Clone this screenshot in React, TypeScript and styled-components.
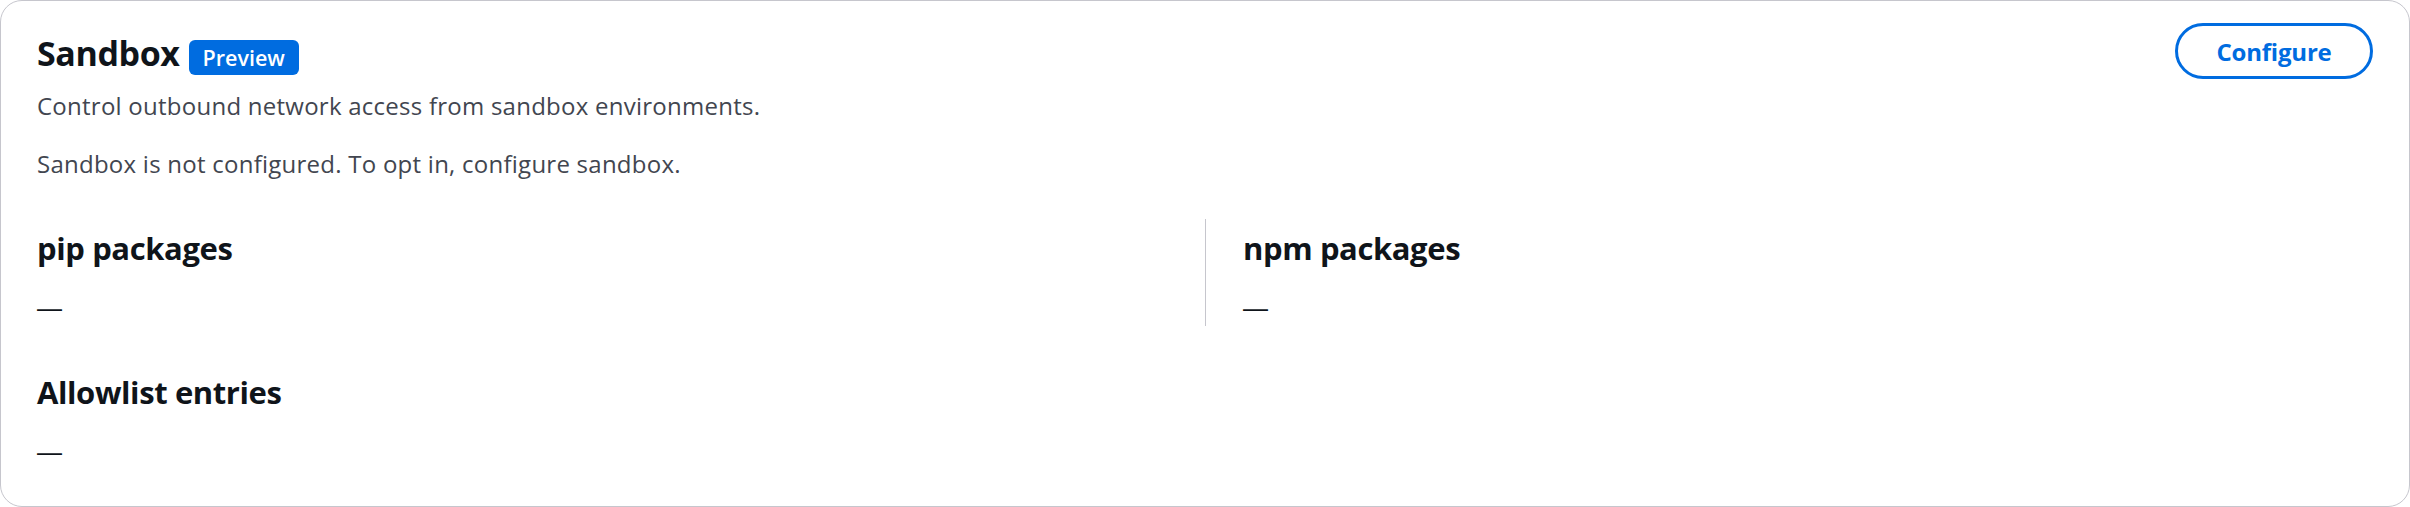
import React from 'react'
import styled, { createGlobalStyle } from 'styled-components'

const GlobalStyle = createGlobalStyle`
    html, body {
        margin: 0;
        padding: 0;
        background: #ffffff;
    }
    body {
        font-family: "Open Sans", "Noto Sans", sans-serif;
        color: #0f141a;
        -webkit-font-smoothing: antialiased;
    }
`;

interface Field {
    label: string
    value?: string
}

const packageFields: Field[] = [
    { label: 'pip packages' },
    { label: 'npm packages' },
];

export default function App() {
    return (
        <>
            <GlobalStyle />
            <Card>
                <Header>
                    <HeaderText>
                        <TitleRow>
                            <Title>Sandbox</Title>
                            <Badge>Preview</Badge>
                        </TitleRow>
                        <Description>Control outbound network access from sandbox environments.</Description>
                        <Status>Sandbox is not configured. To opt in, configure sandbox.</Status>
                    </HeaderText>
                    <ConfigureButton type="button">Configure</ConfigureButton>
                </Header>

                <Columns>
                    {packageFields.map((field, i) => (
                        <Column key={field.label} $divided={i > 0}>
                            <FieldLabel>{field.label}</FieldLabel>
                            <FieldValue>{field.value ?? '—'}</FieldValue>
                        </Column>
                    ))}
                </Columns>

                <Section>
                    <FieldLabel>Allowlist entries</FieldLabel>
                    <FieldValue>—</FieldValue>
                </Section>
            </Card>
        </>
    )
}


const Card = styled.div`
    box-sizing: border-box;
    width: 2410px;
    height: 507px;
    border: 1px solid #c6c6cd;
    border-radius: 22px;
    padding: 22px 36px 0 36px;
    background: #ffffff;
`;

const Header = styled.div`
    display: flex;
    justify-content: space-between;
    align-items: flex-start;
`;

const HeaderText = styled.div`
    padding-top: 7px;
`;

const TitleRow = styled.div`
    display: flex;
    align-items: baseline;
    gap: 9px;
`;

const Title = styled.h2`
    margin: 0;
    font-size: 34px;
    line-height: 46px;
    font-weight: 700;
    letter-spacing: -0.4px;
    color: #0f141a;
`;

const Badge = styled.span`
    display: inline-block;
    background: #006ce0;
    color: #ffffff;
    font-size: 21.5px;
    font-weight: 600;
    line-height: 35px;
    padding: 0 14px;
    border-radius: 6px;
`;

const Description = styled.p`
    margin: 14px 0 0 0;
    font-size: 24px;
    line-height: 32px;
    letter-spacing: 0.25px;
    color: #424650;
`;

const Status = styled(Description)`
    margin-top: 26px;
`;

const ConfigureButton = styled.button`
    box-sizing: border-box;
    width: 198px;
    height: 56px;
    border: 3px solid #006ce0;
    border-radius: 28px;
    background: #ffffff;
    color: #006ce0;
    font-family: inherit;
    font-size: 24px;
    font-weight: 700;
    letter-spacing: -0.2px;
    cursor: pointer;
`;

const Columns = styled.div`
    display: grid;
    grid-template-columns: 1fr 1fr;
    margin-top: 39px;
`;

const Column = styled.div<{ $divided?: boolean }>`
    padding-top: 9px;
    height: 107px;
    box-sizing: border-box;
    ${({ $divided }) => $divided && `
        border-left: 1.5px solid #c6c6cd;
        padding-left: 37px;
    `}
`;

const Section = styled.div`
    padding-top: 46px;
`;

const FieldLabel = styled.h3`
    margin: 0;
    font-size: 31px;
    line-height: 40px;
    font-weight: 700;
    letter-spacing: -0.4px;
    color: #0f141a;
`;

const FieldValue = styled.div`
    margin-top: 24px;
    font-family: "Liberation Sans", Arial, sans-serif;
    font-size: 25px;
    line-height: 32px;
    color: #0f141a;
`;
